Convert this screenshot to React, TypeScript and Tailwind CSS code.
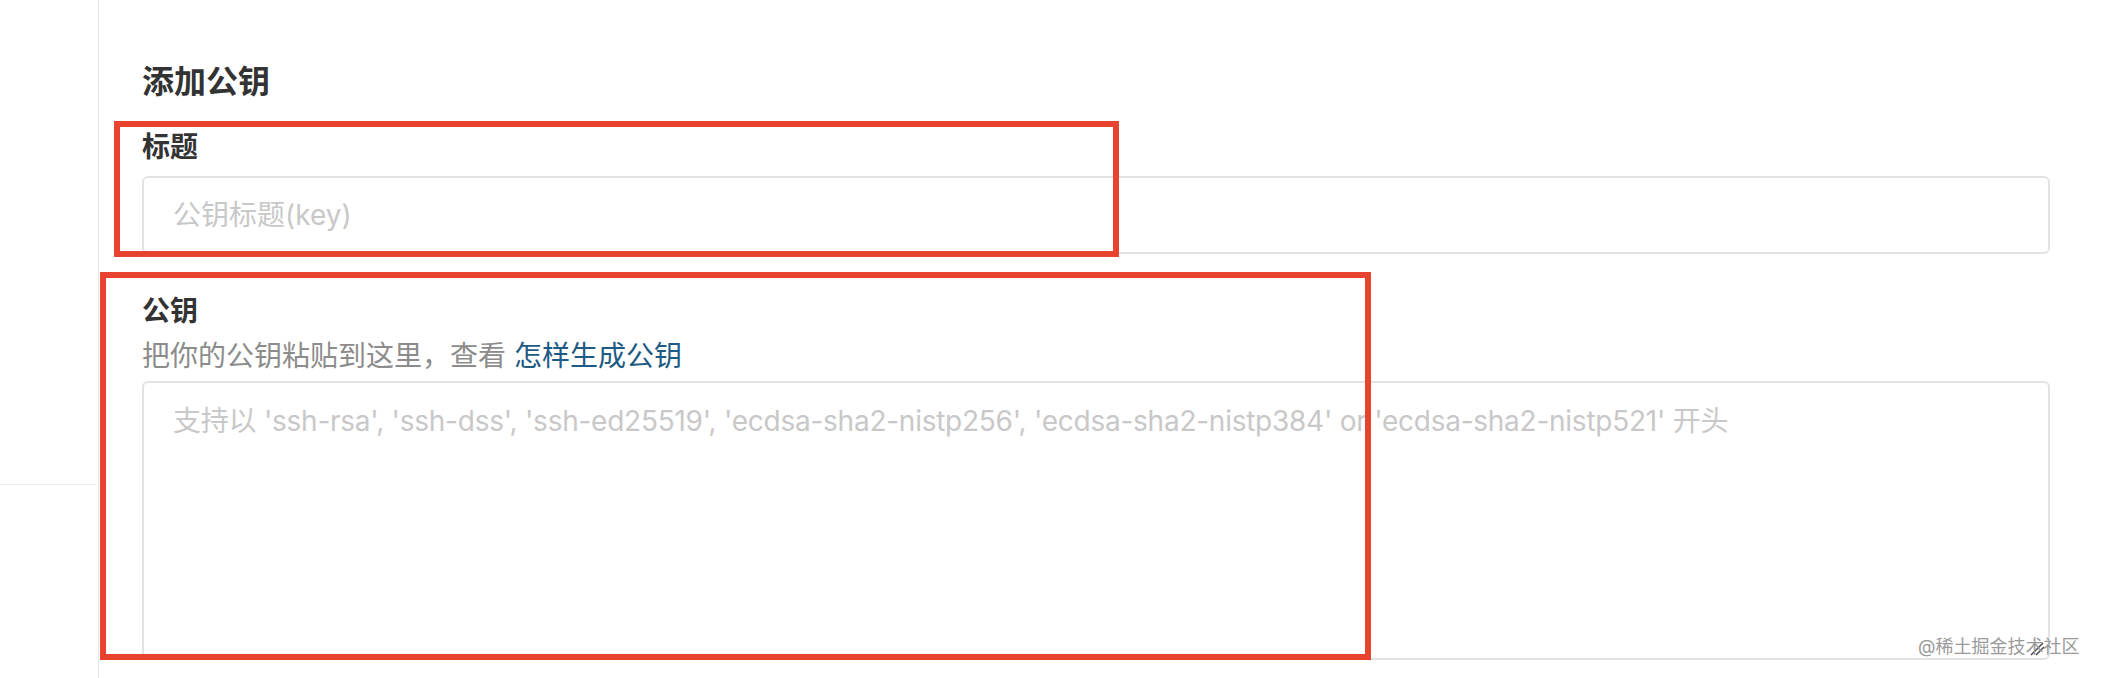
const font = { fontFamily: 'Inter, "Noto Sans CJK SC", sans-serif' };

const placeholder =
  "支持以 'ssh-rsa', 'ssh-dss', 'ssh-ed25519', 'ecdsa-sha2-nistp256', 'ecdsa-sha2-nistp384' or 'ecdsa-sha2-nistp521' 开头";

const App = () => {
  return (
    <div className="relative flex w-[2102px] h-[678px] overflow-hidden bg-white" style={font}>
      {/* sidebar edge */}
      <div className="flex flex-col w-[99px] shrink-0 border-r border-[#e6e6e6]">
        <div className="h-[484px]" />
        <div className="w-[96px] border-t border-[#ededed]" />
      </div>

      {/* form */}
      <div className="flex-1 flex flex-col pl-[43px] pr-[52px]">
        <h2 className="mt-[66px] text-[32px] leading-[32px] font-bold text-[#333]">添加公钥</h2>

        <label className="mt-[35px] text-[28px] leading-[28px] font-bold text-[#333]">标题</label>
        <div className="mt-[15px] h-[78px] flex items-center border-2 border-[#e3e3e3] rounded-[6px] pl-[29px]">
          <span className="text-[28px] leading-[28px] text-[#c8c8c8]">公钥标题(key)</span>
        </div>

        <label className="mt-[43px] text-[28px] leading-[28px] font-bold text-[#333]">公钥</label>
        <p className="mt-[17px] text-[28px] leading-[28px] text-[#8c8c8c]">
          把你的公钥粘贴到这里，查看 <span className="text-[#1d5a84]">怎样生成公钥</span>
        </p>
        <div className="relative mt-[11px] h-[279px] border-2 border-[#e3e3e3] rounded-[6px] pl-[29px] pt-[24px]">
          <span className="block text-[28px] leading-[28px] tracking-[-0.25px] text-[#c8c8c8] whitespace-nowrap">{placeholder}</span>
          <svg className="absolute right-[3px] bottom-[2px]" width="16" height="14" viewBox="0 0 16 14">
            <line x1="2" y1="13" x2="14" y2="1" stroke="#444" strokeWidth="1.5" />
            <line x1="7" y1="13" x2="15" y2="5" stroke="#444" strokeWidth="1.5" />
          </svg>
        </div>
      </div>

      {/* red annotation boxes */}
      <div className="absolute left-[114px] top-[121px] w-[1005px] h-[136px] border-[6px] border-[#e8432e]" />
      <div className="absolute left-[100px] top-[272px] w-[1271px] h-[388px] border-[6px] border-[#e8432e]" />

      {/* watermark */}
      <div className="absolute left-[1918px] top-[636px] text-[18px] leading-[22px] text-[#9a9a9a]">@稀土掘金技术社区</div>
    </div>
  );
};

export default App;
